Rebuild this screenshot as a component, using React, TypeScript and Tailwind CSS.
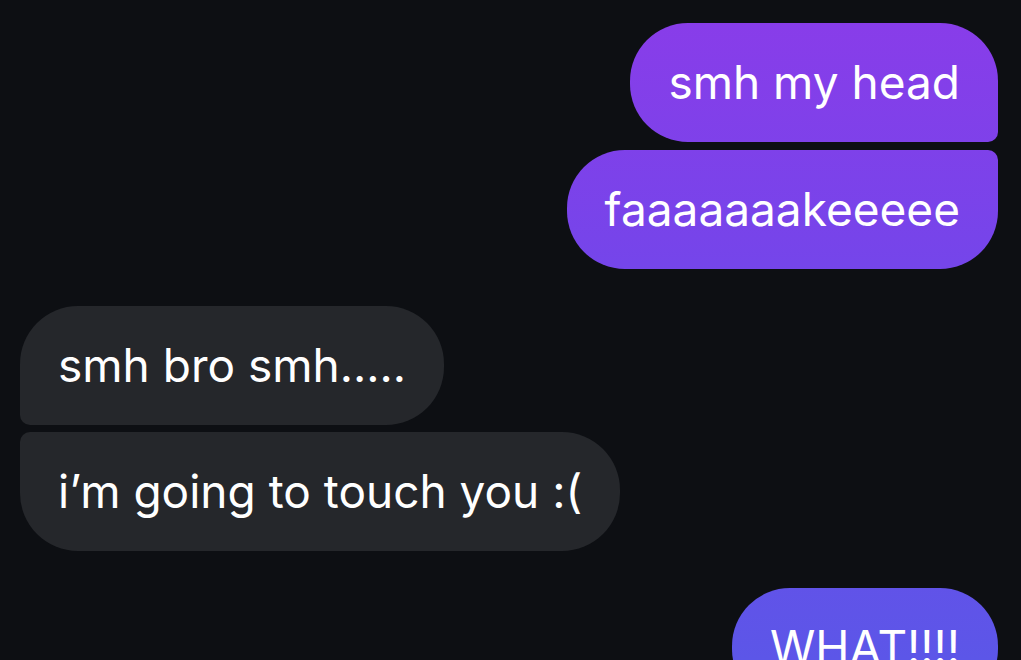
import React from "react";

const grad =
  "bg-[linear-gradient(180deg,#8a3ce9_0%,#7545ea_40%,#5c56e8_100%)] bg-fixed";

function Out({ text, corner }: { text: string; corner: string }) {
  return (
    <div
      className={`${grad} ${corner} text-white px-[38px] py-[33px] leading-[53px] text-[46px] tracking-[0px] whitespace-nowrap`}
    >
      {text}
    </div>
  );
}

function In({ text, corner }: { text: string; corner: string }) {
  return (
    <div
      className={`bg-[#25272b] ${corner} text-white px-[38px] py-[33px] leading-[53px] text-[46px] tracking-[0px] whitespace-nowrap`}
    >
      {text}
    </div>
  );
}

export default function App() {
  return (
    <div
      className="w-[1021px] h-[660px] overflow-hidden bg-[#0d0f13] pt-[23px] pl-[20px] pr-[23px] flex flex-col"
      style={{ fontFamily: "Inter, 'Noto Sans', sans-serif" }}
    >
      <div className="flex flex-col items-end gap-[8px]">
        <Out text="smh my head" corner="rounded-[58px] rounded-br-[10px]" />
        <Out text="faaaaaaakeeeee" corner="rounded-[58px] rounded-tr-[10px]" />
      </div>
      <div className="flex flex-col items-start gap-[7px] mt-[37px]">
        <In text="smh bro smh....." corner="rounded-[58px] rounded-bl-[10px]" />
        <In text="i’m going to touch you :(" corner="rounded-[58px] rounded-tl-[10px]" />
      </div>
      <div className="flex flex-col items-end mt-[37px]">
        <Out text="WHAT!!!!" corner="rounded-[58px]" />
      </div>
    </div>
  );
}
